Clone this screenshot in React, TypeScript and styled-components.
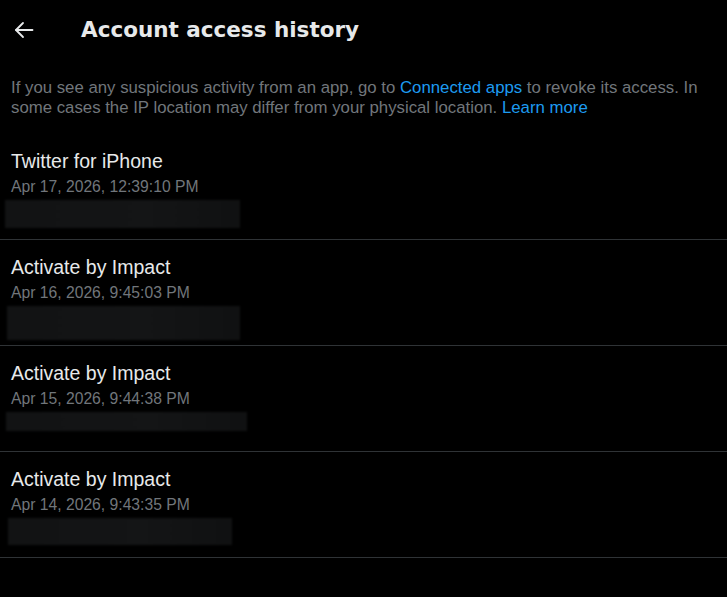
import React from 'react'
import styled, { createGlobalStyle } from 'styled-components'

// page-wide reset, dark background
const GlobalStyle = createGlobalStyle`
  html, body {
    margin: 0;
    padding: 0;
    background: #000;
  }
  body {
    font-family: "Liberation Sans", Arial, sans-serif;
    color: #e7e9ea;
  }
`

interface AccessEntry {
  app: string,
  date: string,
  blurWidth: number,
  blurHeight: number,
  blurShift: number
}

const entries: AccessEntry[] = [
  { app: 'Twitter for iPhone', date: 'Apr 17, 2026, 12:39:10 PM', blurWidth: 235, blurHeight: 28, blurShift: -6 },
  { app: 'Activate by Impact', date: 'Apr 16, 2026, 9:45:03 PM', blurWidth: 233, blurHeight: 34, blurShift: -4 },
  { app: 'Activate by Impact', date: 'Apr 15, 2026, 9:44:38 PM', blurWidth: 241, blurHeight: 19, blurShift: -5 },
  { app: 'Activate by Impact', date: 'Apr 14, 2026, 9:43:35 PM', blurWidth: 224, blurHeight: 27, blurShift: -3 },
]

const Page = styled.div`
  width: 100%;
  min-height: 100vh;
  background: #000;
`

const Header = styled.header`
  display: flex;
  align-items: center;
  height: 60px;
  padding-left: 14px;
  gap: 47px;
`

const BackButton = styled.button`
  display: flex;
  align-items: center;
  justify-content: center;
  width: 20px;
  height: 20px;
  padding: 0;
  border: none;
  background: transparent;
  color: #e7e9ea;
  cursor: pointer;
`

const Title = styled.h1`
  margin: 0;
  font-family: "DejaVu Sans", "Open Sans", sans-serif;
  font-weight: 700;
  font-size: 21.5px;
  line-height: 24px;
  color: #e7e9ea;
`

const Intro = styled.p`
  margin: 0;
  padding: 18px 11px 16px;
  font-size: 16.8px;
  line-height: 20px;
  color: #71767b;
`

const Link = styled.a`
  color: #1d9bf0;
  text-decoration: none;
`

const Row = styled.div`
  box-sizing: border-box;
  height: 106px;
  padding: 15px 11px 0;
  border-bottom: 1px solid #2f3336;
`

const AppName = styled.div`
  font-size: 19.5px;
  line-height: 24px;
  color: #e7e9ea;
`

const When = styled.div`
  margin-top: 4px;
  font-size: 15.7px;
  line-height: 20px;
  color: #71767b;
`

// redacted IP / location block
const Redacted = styled.div<{ $w: number, $h: number, $shift: number }>`
  margin-top: 3px;
  margin-left: ${p => p.$shift}px;
  width: ${p => p.$w}px;
  height: ${p => p.$h}px;
  background: linear-gradient(90deg, #121314, #141516 60%, #101112);
  filter: blur(1.2px);
`

const ArrowIcon = () => (
  <svg width="20" height="20" viewBox="0 0 20 20" fill="none" stroke="currentColor" strokeWidth="1.8" strokeLinecap="round" strokeLinejoin="round">
    <path d="M18.5 10H2" />
    <path d="M9 3L2 10l7 7" />
  </svg>
)

const App = () => {
  return (
    <>
      <GlobalStyle />
      <Page>
        <Header>
          <BackButton aria-label="Back">
            <ArrowIcon />
          </BackButton>
          <Title>Account access history</Title>
        </Header>
        <Intro>
          If you see any suspicious activity from an app, go to <Link href="#">Connected apps</Link> to revoke its access. In
          <br />
          some cases the IP location may differ from your physical location. <Link href="#">Learn more</Link>
        </Intro>
        {entries.map((e, i) => (
          <Row key={i}>
            <AppName>{e.app}</AppName>
            <When>{e.date}</When>
            <Redacted $w={e.blurWidth} $h={e.blurHeight} $shift={e.blurShift} />
          </Row>
        ))}
      </Page>
    </>
  )
}

export default App
